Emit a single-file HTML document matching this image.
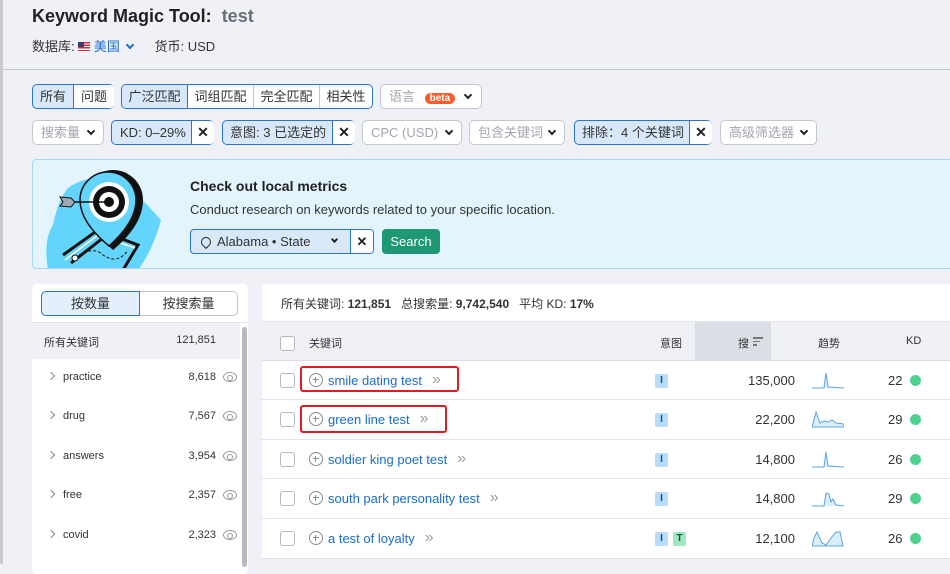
<!DOCTYPE html>
<html><head><meta charset="utf-8"><style>
*{box-sizing:border-box;margin:0;padding:0}
body{width:950px;height:564px;overflow:hidden;background:#f0f1f6;font-family:"Liberation Sans","Noto Sans CJK SC",sans-serif;color:#333;position:relative;font-size:13px}
.a{position:absolute}
.btn{position:absolute;height:25px;border:1px solid #c4c7cf;border-radius:5px;background:#fff;font-size:13px;line-height:23px;color:#333;white-space:nowrap}
.sel{background:#d9e8f8;border-color:#2a75d0}
.ph{color:#a3a6ae}
.seg{position:absolute;top:0;height:23px;text-align:center}
.chev{display:inline-block;width:6px;height:6px;border-right:2px solid #222;border-bottom:2px solid #222;transform:rotate(45deg);position:absolute;top:7px}
.x{position:absolute;top:0;height:23px;width:23px;border-left:1px solid #2a75d0;text-align:center;font-weight:bold;font-size:14px;color:#222}
.row{position:absolute;left:262px;width:688px;height:39px;border-bottom:1px solid #e2e4ea;background:#fff}
.cb{position:absolute;left:18px;top:12px;width:15px;height:15px;border:1px solid #b5b8c0;border-radius:3px;background:#fff}
.kw{position:absolute;left:47px;top:11px;color:#1a6dcc;font-size:13px;white-space:nowrap;display:flex;align-items:center;height:16px}
.plus{display:inline-block;width:14px;height:14px;border:1.5px solid #8a8d95;border-radius:50%;position:relative;margin-right:5px}
.plus:before{content:"";position:absolute;left:2.5px;top:4.75px;width:6px;height:1.5px;background:#8a8d95}
.plus:after{content:"";position:absolute;left:4.75px;top:2.5px;width:1.5px;height:6px;background:#8a8d95}
.dbl{color:#9a9da5;margin-left:10px;font-size:16px;letter-spacing:-1px}
.it{position:absolute;top:13px;width:13px;height:14px;border-radius:2px;background:#b9dcf8;color:#1a4f8a;font-size:10px;font-weight:bold;text-align:center;line-height:14px}
.vol{position:absolute;right:155px;top:12px;font-size:13px;color:#333}
.kd{position:absolute;left:626px;top:12px;font-size:13px}
.dot{position:absolute;left:648px;top:14px;width:11px;height:11px;border-radius:50%;background:#4fd08f}
.tr{position:absolute;left:550px;top:9px}
.lr{position:absolute;left:32px;width:208px;height:39px;background:#fff;font-size:11px}
.lr .c{position:absolute;left:16px;top:14px;width:6px;height:6px;border-right:1.5px solid #888;border-bottom:1.5px solid #888;transform:rotate(-45deg)}
.lr .t{position:absolute;left:31px;top:12px}
.lr .n{position:absolute;right:24px;top:12px}
.eye{position:absolute;right:3px;top:13px;width:14px;height:10px;border:1.5px solid #999;border-radius:50%}
.eye:after{content:"";position:absolute;left:3px;top:1.5px;width:4px;height:4px;border:1.5px solid #999;border-radius:50%}
</style></head><body>
<div class="a" style="left:0;top:0;width:3px;height:564px;background:#c8cad0"></div>
<div class="a" style="left:32px;top:6px;font-size:18px;font-weight:bold;color:#222">Keyword Magic Tool:&nbsp; <span style="color:#6c6e76">test</span></div>
<div class="a" style="left:32px;top:36px;font-size:13px;color:#333">数据库: <span style="display:inline-block;width:12px;height:9px;background:repeating-linear-gradient(#c8313e 0 1.3px,#fff 1.3px 2.6px);position:relative;vertical-align:0"><span style="position:absolute;left:0;top:0;width:6px;height:5px;background:#3c3b6e"></span></span> <span style="color:#1a6dcc">美国</span> <span style="display:inline-block;width:6px;height:6px;border-right:2px solid #1a6dcc;border-bottom:2px solid #1a6dcc;transform:rotate(45deg);margin:0 4px 3px 3px"></span><span style="margin-left:18px">货币: USD</span></div>
<div class="a" style="left:3px;top:69px;width:947px;height:1px;background:#c4c7cf"></div>

<div class="btn sel" style="left:32px;top:84px;width:82px"><div class="seg" style="left:0;width:40px">所有</div><div class="seg" style="left:40px;width:41px;background:#fff;border-left:1px solid #2a75d0;border-radius:0 4px 4px 0">问题</div></div>
<div class="btn" style="left:121px;top:84px;width:252px;border-color:#2a75d0"><div class="seg" style="left:0;width:66px;background:#d9e8f8;border-radius:4px 0 0 4px;border-right:1px solid #2a75d0">广泛匹配</div><div class="seg" style="left:66px;width:66px;border-right:1px solid #c4c7cf">词组匹配</div><div class="seg" style="left:132px;width:66px;border-right:1px solid #c4c7cf">完全匹配</div><div class="seg" style="left:198px;width:52px">相关性</div></div>
<div class="btn" style="left:380px;top:84px;width:102px"><span class="ph" style="margin-left:8px">语言</span> <span style="background:#ff5a2e;color:#fff;border-radius:8px;font-size:10px;padding:0 5px;margin-left:6px;font-weight:bold">beta</span><span class="chev" style="left:84px"></span></div>

<div class="btn" style="left:32px;top:120px;width:72px"><span class="ph" style="margin-left:8px">搜索量</span><span class="chev" style="left:55px"></span></div>
<div class="btn sel" style="left:111px;top:120px;width:103px"><span style="margin-left:8px">KD: 0–29%</span><div class="x" style="left:79px;background:#fff;border-radius:0 4px 4px 0">✕</div></div>
<div class="btn sel" style="left:222px;top:120px;width:133px"><span style="margin-left:7px">意图: 3 已选定的</span><div class="x" style="left:109px;background:#fff;border-radius:0 4px 4px 0">✕</div></div>
<div class="btn" style="left:362px;top:120px;width:100px"><span class="ph" style="margin-left:8px">CPC (USD)</span><span class="chev" style="left:83px"></span></div>
<div class="btn" style="left:469px;top:120px;width:96px"><span class="ph" style="margin-left:8px">包含关键词</span><span class="chev" style="left:79px"></span></div>
<div class="btn sel" style="left:574px;top:120px;width:138px"><span style="margin-left:7px">排除：4 个关键词</span><div class="x" style="left:114px;background:#fff;border-radius:0 4px 4px 0">✕</div></div>
<div class="btn" style="left:720px;top:120px;width:97px"><span class="ph" style="margin-left:8px">高级筛选器</span><span class="chev" style="left:80px"></span></div>

<div class="a" style="left:32px;top:159px;width:930px;height:110px;background:#e3f4fd;border:1px solid #a5d6f6;border-radius:4px;overflow:hidden">
<svg width="120" height="110" style="position:absolute;left:10px;top:0" viewBox="0 0 120 110">
<path d="M25 28 Q50 10 85 25 Q100 40 118 60 Q110 90 95 110 L5 110 Q0 80 10 65 Q15 40 25 28Z" fill="#63d4fb"/>
<path d="M20 95 L55 70 L95 85 L80 110 M28 103 L60 78" stroke="#111" stroke-width="3" fill="none"/>
<path d="M22 100 L55 75 L92 88" stroke="#fff" stroke-width="1.5" fill="none"/>
<path d="M32 98 Q50 85 60 95 Q75 105 85 90" stroke="#111" stroke-width="1" stroke-dasharray="3 2" fill="none"/>
<circle cx="32" cy="98" r="3" fill="#fff" stroke="#111"/>
<path d="M70 90 Q40 65 40 40 A30 30 0 0 1 100 40 Q100 65 70 90Z" fill="#111"/>
<path d="M66 86 Q37 62 37 40 A28 28 0 0 1 93 40 Q93 62 66 86Z" fill="#63d4fb" stroke="#111" stroke-width="1.5"/>
<circle cx="66" cy="42" r="20" fill="#fff"/><circle cx="66" cy="42" r="16" fill="#111"/><circle cx="66" cy="42" r="10" fill="#fff"/><circle cx="66" cy="42" r="5" fill="#111"/>
<path d="M20 42 L66 42" stroke="#111" stroke-width="1.5"/><path d="M17 37 L28 38 L32 42 L28 47 L17 46 L20 42Z" fill="#9fa8b0" stroke="#111"/>
</svg>
<div class="a" style="left:157px;top:18px;font-size:14px;font-weight:bold;color:#222">Check out local metrics</div>
<div class="a" style="left:157px;top:42px;font-size:13px;color:#333">Conduct research on keywords related to your specific location.</div>
<div class="a" style="left:157px;top:69px;width:184px;height:25px;border:1px solid #2a75d0;border-radius:4px;background:#d9e8f8;font-size:13px;line-height:23px"><span style="display:inline-block;width:10px;height:10px;border:1.5px solid #222;border-radius:50% 50% 50% 0;transform:rotate(-45deg);margin:0 6px 0 10px;vertical-align:-1px"></span>Alabama • State<span class="chev" style="left:141px;width:5px;height:5px"></span><div class="x" style="left:159px;background:#fff;border-radius:0 3px 3px 0;font-size:13px">✕</div></div>
<div class="a" style="left:349px;top:69px;width:58px;height:25px;background:#1e9775;border-radius:4px;color:#fff;font-size:13px;line-height:25px;text-align:center">Search</div>
</div>

<!-- left panel -->
<div class="a" style="left:32px;top:284px;width:216px;height:290px;background:#fff;border-radius:5px"></div>
<div class="a" style="left:41px;top:291px;width:197px;height:25px;border:1px solid #c4c7cf;border-radius:5px;background:#fff;font-size:13px">
<div class="seg" style="left:-1px;top:-1px;width:99px;height:25px;line-height:23px;background:#e3f0fc;border:1px solid #2a75d0;border-radius:5px 0 0 5px">按数量</div><div class="seg" style="left:98px;width:97px;line-height:23px">按搜索量</div></div>
<div class="a" style="left:32px;top:322px;width:216px;height:1px;background:#e2e4ea"></div>
<div class="lr" style="top:323px;height:36px;background:#f0f1f6"><span class="a" style="left:12px;top:11px">所有关键词</span><span class="a" style="right:24px;top:11px">121,851</span></div>
<div class="lr" style="top:359px"><i class="c"></i><span class="t">practice</span><span class="n">8,618</span><i class="eye"></i></div>
<div class="lr" style="top:398px"><i class="c"></i><span class="t">drug</span><span class="n">7,567</span><i class="eye"></i></div>
<div class="lr" style="top:438px"><i class="c"></i><span class="t">answers</span><span class="n">3,954</span><i class="eye"></i></div>
<div class="lr" style="top:477px"><i class="c"></i><span class="t">free</span><span class="n">2,357</span><i class="eye"></i></div>
<div class="lr" style="top:517px"><i class="c"></i><span class="t">covid</span><span class="n">2,323</span><i class="eye"></i></div>
<div class="a" style="left:242px;top:327px;width:5px;height:240px;background:#b8bac0;border-radius:3px"></div>

<!-- right panel -->
<div class="a" style="left:262px;top:284px;width:700px;height:38px;background:#fff;border-radius:5px 0 0 0;border-bottom:1px solid #e2e4ea"><span class="a" style="left:19px;top:11px;font-size:12px;white-space:nowrap">所有关键词: <b>121,851</b>&nbsp;&nbsp; 总搜索量: <b>9,742,540</b>&nbsp;&nbsp; 平均 KD: <b>17%</b></span></div>
<div class="row" style="top:322px;height:39px;background:#f0f1f6;border-bottom:1px solid #dcdee4;font-size:11px">
<div class="cb" style="top:14px"></div><span class="a" style="left:47px;top:13px">关键词</span><span class="a" style="left:398px;top:13px">意图</span>
<div class="a" style="left:433px;top:0;width:76px;height:38px;background:#dcdee6"><span class="a" style="right:22px;top:13px">搜</span><span class="a" style="right:8px;top:15px;width:10px;line-height:3px;font-size:0"><i style="display:block;width:10px;height:1.5px;background:#777;margin-bottom:2px"></i><i style="display:block;width:7px;height:1.5px;background:#777;margin-bottom:2px"></i><i style="display:block;width:4px;height:1.5px;background:#777"></i></span></div>
<span class="a" style="left:556px;top:13px">趋势</span><span class="a" style="left:644px;top:13px">KD</span></div>

<div class="row" style="top:361px"><div class="cb"></div><div class="kw"><span class="plus"></span>smile dating test<span class="dbl">»</span></div><div class="it" style="left:393px">I</div><div class="vol">135,000</div><svg class="tr" width="32" height="20"><path d="M0 18 L12 18 L14 3 L16 17 L32 18" stroke="#5ba4e6" fill="#dbeefc" stroke-width="1"/></svg><div class="kd">22</div><div class="dot"></div>
<div class="a" style="left:38px;top:5px;width:159px;height:26px;border:2px solid #e01b24;border-radius:3px"></div></div>
<div class="row" style="top:400px;height:40px"><div class="cb"></div><div class="kw"><span class="plus"></span>green line test<span class="dbl">»</span></div><div class="it" style="left:393px">I</div><div class="vol">22,200</div><svg class="tr" width="32" height="20"><path d="M0 18 L4 3 L8 14 L12 12 L16 13 L20 11 L24 14 L32 15 L32 18 L0 18Z" stroke="#5ba4e6" fill="#dbeefc" stroke-width="1"/></svg><div class="kd">29</div><div class="dot"></div>
<div class="a" style="left:38px;top:5px;width:147px;height:28px;border:2px solid #e01b24;border-radius:3px"></div></div>
<div class="row" style="top:440px"><div class="cb"></div><div class="kw"><span class="plus"></span>soldier king poet test<span class="dbl">»</span></div><div class="it" style="left:393px">I</div><div class="vol">14,800</div><svg class="tr" width="32" height="20"><path d="M0 18 L12 18 L14 3 L16 17 L32 18" stroke="#5ba4e6" fill="#dbeefc" stroke-width="1"/></svg><div class="kd">26</div><div class="dot"></div></div>
<div class="row" style="top:479px;height:40px"><div class="cb"></div><div class="kw"><span class="plus"></span>south park personality test<span class="dbl">»</span></div><div class="it" style="left:393px">I</div><div class="vol">14,800</div><svg class="tr" width="32" height="20"><path d="M0 18 L12 18 L14 5 L17 6 L19 14 L21 11 L24 17 L32 18" stroke="#5ba4e6" fill="#dbeefc" stroke-width="1"/></svg><div class="kd">29</div><div class="dot"></div></div>
<div class="row" style="top:519px;height:40px"><div class="cb"></div><div class="kw"><span class="plus"></span>a test of loyalty<span class="dbl">»</span></div><div class="it" style="left:393px">I</div><div class="it" style="left:411px;background:#9ee9c2;color:#13573a">T</div><div class="vol">12,100</div><svg class="tr" width="32" height="20"><path d="M0 18 L2 10 L5 4 L10 15 L14 17 L19 10 L24 4 L28 4 L31 18 Z" stroke="#5ba4e6" fill="#dbeefc" stroke-width="1"/></svg><div class="kd">26</div><div class="dot"></div></div>
</body></html>
